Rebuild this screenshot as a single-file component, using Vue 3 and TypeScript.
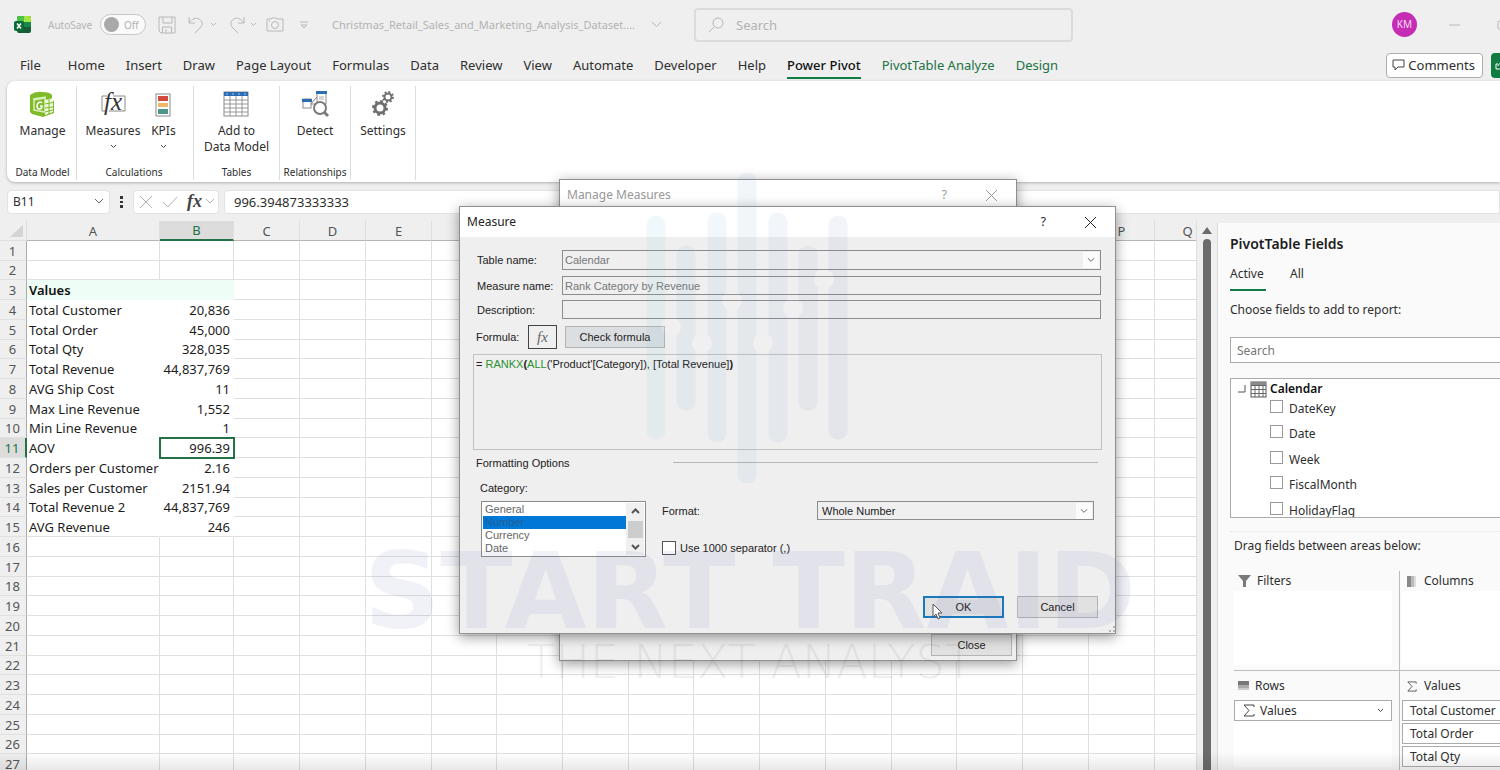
<script setup lang="ts">
import { ref } from 'vue'

interface Tab { label: string; kind?: string }
interface Row { n: number; label?: string; value?: string }

const tabs: Tab[] = [
  { label: 'File', kind: 'file' }, { label: 'Home' }, { label: 'Insert' }, { label: 'Draw' },
  { label: 'Page Layout' }, { label: 'Formulas' }, { label: 'Data' }, { label: 'Review' },
  { label: 'View' }, { label: 'Automate' }, { label: 'Developer' }, { label: 'Help' },
  { label: 'Power Pivot', kind: 'current' }, { label: 'PivotTable Analyze', kind: 'context' },
  { label: 'Design', kind: 'context' },
]

const columns = 'ABCDEFGHIJKLMNOPQ'.split('')

const pivot: Record<number, [string, string]> = {
  3: ['Values', ''],
  4: ['Total Customer', '20,836'],
  5: ['Total Order', '45,000'],
  6: ['Total Qty', '328,035'],
  7: ['Total Revenue', '44,837,769'],
  8: ['AVG Ship Cost', '11'],
  9: ['Max Line Revenue', '1,552'],
  10: ['Min Line Revenue', '1'],
  11: ['AOV', '996.39'],
  12: ['Orders per Customer', '2.16'],
  13: ['Sales per Customer', '2151.94'],
  14: ['Total Revenue 2', '44,837,769'],
  15: ['AVG Revenue', '246'],
}

const rows: Row[] = Array.from({ length: 27 }, (_, i) => ({
  n: i + 1,
  label: pivot[i + 1]?.[0],
  value: pivot[i + 1]?.[1],
}))

const fields = ['DateKey', 'Date', 'Week', 'FiscalMonth', 'HolidayFlag']
const valueItems = ['Total Customer', 'Total Order', 'Total Qty']
const categories = ['General', 'Number', 'Currency', 'Date']

const cellRef = ref('B11')
const cellFormula = ref('996.394873333333')
const tableName = ref('Calendar')
const measureName = ref('Rank Category by Revenue')
const description = ref('')
const category = ref('Number')
const format = ref('Whole Number')
const useSeparator = ref(false)
</script>

<template>
  <div class="app">
    <header class="titlebar">
      <svg class="xl" width="18" height="18" viewBox="0 0 18 18" aria-hidden="true">
        <rect x="3" y="0" width="14" height="17" rx="2" fill="#185c37" />
        <path d="M5 0h5v6H3V2a2 2 0 0 1 2-2z" fill="#4cc24a" />
        <path d="M10 0h5a2 2 0 0 1 2 2v4h-7z" fill="#a5e63c" />
        <path d="M10 6h7v5h-7z" fill="#18884b" />
        <rect x="0" y="5" width="10" height="10" rx="2" fill="#0b6b37" />
        <path d="M3 7.500l4 5M7 7.500l-4 5" stroke="#fff" stroke-width="1.500" />
      </svg>
      <span class="autosave">AutoSave</span>
      <button class="toggle" type="button" role="switch" aria-checked="false" aria-label="AutoSave"><i></i>Off</button>
      <button class="tool save" type="button" aria-label="Save">
        <svg width="18" height="18" viewBox="0 0 18 18"><path d="M1 1h16v16H3l-2-2zM5 1v6h9V1M4.500 17v-6h9v6M8 13v4" /></svg>
      </button>
      <button class="tool undo" type="button" aria-label="Undo">
        <svg width="17" height="18" viewBox="0 0 17 18"><path d="M1 1v6h6M1 7c3-4 7-6 10-4 4 2 4 6 1 9l-5 5" /></svg>
        <svg width="7" height="5" viewBox="0 0 7 5"><path d="M1 1l2.500 2.500L6 1" /></svg>
      </button>
      <button class="tool redo" type="button" aria-label="Redo">
        <svg width="17" height="18" viewBox="0 0 17 18"><path d="M16 1v6h-6M16 7c-3-4-7-6-10-4-4 2-4 6-1 9l5 5" /></svg>
        <svg width="7" height="5" viewBox="0 0 7 5"><path d="M1 1l2.500 2.500L6 1" /></svg>
      </button>
      <button class="tool camera" type="button" aria-label="Screenshot">
        <svg width="18" height="15" viewBox="0 0 18 15"><path d="M1 2h4l1-1h4l1 1h6v12H1z" /><circle cx="9" cy="8" r="3.500" /><path d="M3 4h1" /></svg>
      </button>
      <button class="tool more" type="button" aria-label="Customize toolbar">
        <svg width="8" height="8" viewBox="0 0 8 8"><path d="M0 1h8M1 4l3 3 3-3z" /></svg>
      </button>
      <button class="filename" type="button">Christmas_Retail_Sales_and_Marketing_Analysis_Dataset....
        <svg width="11" height="7" viewBox="0 0 11 7"><path d="M1 1l4.500 4.500L10 1" /></svg>
      </button>
      <label class="topsearch">
        <svg width="16" height="16" viewBox="0 0 16 16"><circle cx="10" cy="6" r="5" /><path d="M6 10l-5 5" /></svg>
        <input type="search" placeholder="Search" aria-label="Search" />
      </label>
      <div class="account">
        <span class="avatar">KM</span>
        <button type="button" class="win" aria-label="Minimize"><svg width="11" height="2" viewBox="0 0 11 2"><path d="M0 1h11" /></svg></button>
        <button type="button" class="win max" aria-label="Maximize"><svg width="10" height="10" viewBox="0 0 10 10"><rect x="1" y="1" width="8" height="8" rx="1" /></svg></button>
      </div>
    </header>

    <nav class="tabs" aria-label="Ribbon tabs">
      <a v-for="t in tabs" :key="t.label" href="#" :class="t.kind">{{ t.label }}</a>
      <span class="grow"></span>
      <button class="comments" type="button">
        <svg width="13" height="12" viewBox="0 0 13 12"><path d="M1 1h11v7H6l-3 3V8H1z" /></svg>Comments
      </button>
      <button class="share" type="button" aria-label="Share">
        <svg width="10" height="10" viewBox="0 0 10 10"><path d="M3 4H1v5h8M3 6c1-3 3-3 6-3M7 1l2 2-2 2" /></svg>
      </button>
    </nav>

    <section class="ribbon" aria-label="Power Pivot">
      <div class="group g1">
        <div class="cmds">
          <button type="button">
            <svg width="26" height="26" viewBox="0 0 26 26">
              <path d="M1 4q6-4 12-3 8 0 10 3v5l2 1v12l-11 4-11-3-2-2z" fill="#7fba28" />
              <path d="M4 8l13-2M5 9l11-2v14l-11-2z" fill="none" stroke="#d9efb8" stroke-width="1.500" />
              <path d="M13 12c-1-2-5-1-5 3s5 4 5 0h-2" fill="none" stroke="#fff" stroke-width="1.500" />
              <path d="M16 9l8-2v14l-8 3z" fill="#eef8df" />
              <path d="M16 13l8-1.500M16 17l8-1M16 21l8-2M20 8v15" stroke="#7fba28" />
            </svg>Manage
          </button>
        </div>
        <h2>Data Model</h2>
      </div>
      <div class="group g2">
        <div class="cmds">
          <button type="button">
            <svg width="26" height="26" viewBox="0 0 26 26">
              <path d="M7 5H2v15h3M13 5h12v15H9" fill="none" stroke="#8a8a8a" />
              <text x="4" y="19" class="fxglyph">fx</text>
            </svg>Measures
            <svg class="chev" width="7" height="5" viewBox="0 0 7 5"><path d="M1 1l2.500 2.500L6 1" /></svg>
          </button>
          <button type="button" class="kpi">
            <svg width="26" height="26" viewBox="0 0 26 26">
              <rect x="6" y="3" width="14" height="22" fill="#fff" stroke="#8a8a8a" />
              <path d="M8 5h10v5H8z" fill="#d24a3c" /><path d="M8 12h10v4H8z" fill="#f0b866" /><path d="M8 18h10v5H8z" fill="#4c9587" />
            </svg>KPIs
            <svg class="chev" width="7" height="5" viewBox="0 0 7 5"><path d="M1 1l2.500 2.500L6 1" /></svg>
          </button>
        </div>
        <h2>Calculations</h2>
      </div>
      <div class="group g3">
        <div class="cmds">
          <button type="button">
            <svg width="26" height="26" viewBox="0 0 26 26">
              <rect x="1" y="1" width="24" height="24" fill="#fff" stroke="#8a8a8a" />
              <path d="M1 1h24v4H1z" fill="#2b6cb5" />
              <path d="M1 9h24M1 13h24M1 17h24M1 21h24M7 5v20M13 5v20M19 5v20" stroke="#979797" />
              <path d="M3 3h2M9 3h2M15 3h2M21 3h2" stroke="#a9c8e8" />
            </svg>Add to<br />Data Model
          </button>
        </div>
        <h2>Tables</h2>
      </div>
      <div class="group g4">
        <div class="cmds">
          <button type="button">
            <svg width="26" height="26" viewBox="0 0 26 26">
              <path d="M9 13l4-5 3-3M9 13h4" fill="none" stroke="#8a8a8a" />
              <rect x="1" y="8" width="8" height="9" fill="#fff" stroke="#8a8a8a" /><path d="M0 8h10v3H0z" fill="#2b6cb5" />
              <rect x="15" y="1" width="9" height="12" fill="#fff" stroke="#8a8a8a" /><path d="M14 0h11v3H14z" fill="#2b6cb5" /><path d="M17 6h5M17 8h5" stroke="#aaa" />
              <circle cx="18" cy="17" r="6" fill="#fff" stroke="#7a7a7a" stroke-width="2" /><path d="M22 21l4 4" stroke="#7a7a7a" stroke-width="3" />
            </svg>Detect
          </button>
        </div>
        <h2>Relationships</h2>
      </div>
      <div class="group g5">
        <div class="cmds">
          <button type="button">
            <svg width="26" height="26" viewBox="0 0 26 26" fill="none" stroke="#6f6f6f">
              <circle cx="10" cy="17" r="5" stroke-width="3" /><circle cx="10" cy="17" r="7" stroke-width="2" stroke-dasharray="2.700 2.800" />
              <circle cx="18" cy="6" r="3.500" stroke-width="2" /><circle cx="18" cy="6" r="5" stroke-width="2" stroke-dasharray="1.900 2" />
            </svg>Settings
          </button>
        </div>
      </div>
    </section>

    <div class="formulabar">
      <label class="namebox"><input v-model="cellRef" aria-label="Name box" />
        <svg width="10" height="7" viewBox="0 0 10 7"><path d="M1 1l4 4 4-4" /></svg></label>
      <svg class="dots" width="3" height="12" viewBox="0 0 3 12"><path d="M0 0h3v3H0zM0 5h3v2H0zM0 9h3v3H0z" fill="#333" /></svg>
      <div class="fxtools">
        <button type="button" aria-label="Cancel entry"><svg width="14" height="14" viewBox="0 0 14 14"><path d="M1 1l12 12M13 1L1 13" /></svg></button>
        <button type="button" aria-label="Enter"><svg width="16" height="12" viewBox="0 0 16 12"><path d="M1 6l5 5L15 1" /></svg></button>
        <button type="button" class="fx" aria-label="Insert function">fx</button>
        <svg width="10" height="7" viewBox="0 0 10 7"><path d="M1 1l4 4 4-4" /></svg>
      </div>
      <input v-model="cellFormula" class="formula" aria-label="Formula bar" />
    </div>

    <main class="work">
      <div class="sheet">
        <table>
          <colgroup><col class="rh" /><col v-for="c in columns" :key="c" :class="'c' + c" /></colgroup>
          <thead>
            <tr>
              <th class="corner"><svg width="13" height="12" viewBox="0 0 13 12"><path d="M13 0v12H0z" fill="#d4d4d4" /></svg></th>
              <th v-for="c in columns" :key="c" scope="col" :class="{ on: c === 'B' }">{{ c }}</th>
            </tr>
          </thead>
          <tbody>
            <tr v-for="r in rows" :key="r.n" :class="{ filled: r.label, lead: r.n === 3, last: r.n === 15 }">
              <th scope="row" :class="{ on: r.n === 11 }">{{ r.n }}</th>
              <td>{{ r.label }}</td>
              <td class="num" :class="{ active: r.n === 11 }">{{ r.value }}</td>
              <td v-for="c in columns.slice(2)" :key="c"></td>
            </tr>
          </tbody>
        </table>
      </div>
      <div class="vscroll" aria-hidden="true">
        <svg width="10" height="7" viewBox="0 0 10 7"><path d="M5 0l5 7H0z" fill="#6b6b6b" /></svg>
        <i></i>
      </div>

      <aside class="panel">
        <h1>PivotTable Fields</h1>
        <div class="ptabs"><a href="#" class="sel">Active</a><a href="#">All</a></div>
        <p class="hint">Choose fields to add to report:</p>
        <input class="psearch" type="search" placeholder="Search" aria-label="Search fields" />
        <div class="tree">
          <div class="node">
            <svg width="8" height="8" viewBox="0 0 8 8"><path d="M7 0v7H0" fill="none" stroke="#555" /></svg>
            <svg width="17" height="17" viewBox="0 0 17 17"><rect x="1" y="1" width="15" height="15" fill="#fff" stroke="#555" /><path d="M1 1h15v3H1z" fill="#8a8a8a" /><path d="M1 4.500h15M1 8.500h15M1 12.500h15M5 4v12M9 4v12M13 4v12" stroke="#666" /></svg>
            <b>Calendar</b>
          </div>
          <label v-for="f in fields" :key="f"><input type="checkbox" /><span>{{ f }}</span></label>
        </div>
        <p class="drag">Drag fields between areas below:</p>
        <div class="areas">
          <section>
            <h3><svg width="13" height="12" viewBox="0 0 13 12"><path d="M0 0h13L8 6v6H5V6z" fill="#7a7a7a" /></svg>Filters</h3>
            <div class="drop"></div>
          </section>
          <section>
            <h3><svg width="10" height="11" viewBox="0 0 10 11"><path d="M0 0h4v11H0z" fill="#888" /><path d="M4 0h3v11H4z" fill="#bbb" /><path d="M7 0h2v11H7z" fill="#ddd" /></svg>Columns</h3>
            <div class="drop"></div>
          </section>
          <section>
            <h3><svg width="11" height="10" viewBox="0 0 11 10"><path d="M0 0h11v4H0z" fill="#777" /><path d="M0 4h11v3H0z" fill="#aaa" /><path d="M0 7h11v2H0z" fill="#ccc" /></svg>Rows</h3>
            <div class="drop">
              <button type="button" class="pill">
                <svg width="12" height="13" viewBox="0 0 12 13"><path d="M11 3V1H1l5 5.500L1 12h10v-2" /></svg>Values
                <svg class="end" width="7" height="5" viewBox="0 0 7 5"><path d="M1 1l2.500 2.500L6 1" /></svg>
              </button>
            </div>
          </section>
          <section>
            <h3><svg class="sigma" width="10" height="11" viewBox="0 0 12 13"><path d="M11 3V1H1l5 5.500L1 12h10v-2" /></svg>Values</h3>
            <div class="drop"><button v-for="v in valueItems" :key="v" type="button" class="pill wide">{{ v }}</button></div>
          </section>
        </div>
      </aside>
    </main>

    <section class="dialog manage" role="dialog" aria-label="Manage Measures">
      <header><span>Manage Measures</span>
        <button type="button" class="help" aria-label="Help">?</button>
        <button type="button" aria-label="Close window"><svg width="11" height="11" viewBox="0 0 11 11"><path d="M0 0l11 11M11 0L0 11" /></svg></button>
      </header>
      <footer><button type="button" class="btn">Close</button></footer>
    </section>

    <section class="dialog measure" role="dialog" aria-label="Measure">
      <header><span>Measure</span>
        <button type="button" class="help" aria-label="Help">?</button>
        <button type="button" aria-label="Close dialog"><svg width="11" height="11" viewBox="0 0 11 11"><path d="M0 0l11 11M11 0L0 11" /></svg></button>
      </header>
      <form class="body" @submit.prevent>
        <div class="line">
          <label for="tname">Table name:</label>
          <span class="combo"><select id="tname" v-model="tableName"><option>Calendar</option></select>
            <svg width="9" height="6" viewBox="0 0 9 6"><path d="M1 1l3.500 3.500L8 1" /></svg></span>
        </div>
        <div class="line"><label for="mname">Measure name:</label><input id="mname" v-model="measureName" /></div>
        <div class="line"><label for="desc">Description:</label><input id="desc" v-model="description" /></div>
        <div class="fline">
          <span>Formula:</span>
          <button type="button" class="fxbtn" aria-label="Insert function">fx</button>
          <button type="button" class="btn check">Check formula</button>
        </div>
        <div class="editor" role="textbox" contenteditable="true" aria-label="Formula">= <em>RANKX</em><b>(</b><em>ALL</em>('Product'[Category]), [Total Revenue]<b>)</b></div>
        <div class="legend"><span>Formatting Options</span><i></i></div>
        <label class="catlabel" for="cat">Category:</label>
        <div class="options">
          <div class="listbox">
            <select id="cat" v-model="category" size="4"><option v-for="c in categories" :key="c">{{ c }}</option></select>
            <div class="bar" aria-hidden="true">
              <svg width="9" height="6" viewBox="0 0 9 6"><path d="M1 5l3.500-3.500L8 5" /></svg>
              <i></i>
              <svg width="9" height="6" viewBox="0 0 9 6"><path d="M1 1l3.500 3.500L8 1" /></svg>
            </div>
          </div>
          <div class="fmt">
            <div class="fmtrow"><label for="fmt">Format:</label>
              <span class="combo"><select id="fmt" v-model="format"><option>Whole Number</option></select>
                <svg width="9" height="6" viewBox="0 0 9 6"><path d="M1 1l3.500 3.500L8 1" /></svg></span>
            </div>
            <label class="sep"><input v-model="useSeparator" type="checkbox" />Use 1000 separator (,)</label>
          </div>
        </div>
        <footer><button type="submit" class="btn ok">OK</button><button type="button" class="btn">Cancel</button></footer>
      </form>
      <svg class="grip" width="7" height="7" viewBox="0 0 7 7"><path d="M5 0h2v2H5zM5 4h2v2H5zM1 4h2v2H1z" fill="#b5b5b5" /></svg>
    </section>

    <div class="brand" aria-hidden="true">
      <svg width="220" height="320" viewBox="0 0 220 320">
        <g stroke-width="19" stroke-linecap="round">
          <path d="M16 55v205" stroke="#5bb5d0" /><path d="M46 85v146" stroke="#5c9bd0" /><path d="M77 52v211" stroke="#5fa3cc" />
          <path d="M107 12v292" stroke="#6b93cc" /><path d="M138 52v211" stroke="#6a94c4" /><path d="M168 85v146" stroke="#7a86bb" />
          <path d="M198 55v205" stroke="#7076c6" />
        </g>
        <g fill="#ffffff"><circle cx="31" cy="157" r="10" /><circle cx="62" cy="173" r="10" /><circle cx="92" cy="131" r="10" /><circle cx="123" cy="173" r="10" /><circle cx="153" cy="138" r="10" /><circle cx="184" cy="109" r="10" /></g>
      </svg>
      <div class="word">START TRAID</div>
      <div class="tag">THE NEXT ANALYST</div>
    </div>

    <svg class="cursor" width="12" height="18" viewBox="0 0 12 18" aria-hidden="true"><path d="M1 1v13l3-3 2 5 2-1-2-5h4z" fill="#fff" stroke="#555" /></svg>
    <div class="shade" aria-hidden="true"></div>
  </div>
</template>

<style>
body { overflow: hidden; background: #efefef; }
</style>

<style scoped>
* { box-sizing: border-box; }
button, input, select { font: inherit; color: inherit; margin: 0; padding: 0; border: 0; background: none; outline: none; }
input { min-width: 0; }
h1, h2, h3, p { margin: 0; font-weight: 400; }
a { color: inherit; text-decoration: none; }
svg { flex: none; }
.app { position: relative; display: flex; flex-direction: column; height: 100vh; overflow: hidden; background: #efefef; color: #2e2e2e; font: 13px/16px "Noto Sans", "Open Sans", sans-serif; }

.titlebar { display: flex; align-items: center; height: 49px; flex: none; padding-left: 14px; color: #b3b3b3; }
.titlebar svg:not(.xl) { fill: none; stroke: #b8b8b8; }
.autosave { margin-left: 16px; font-size: 10px; width: 46px; }
.toggle { display: flex; align-items: center; gap: 5px; width: 46px; height: 21px; margin-left: 6px; padding-left: 3px; border: 1px solid #c6c6c6; border-radius: 11px; background: #fafafa; font-size: 10px; }
.toggle i { width: 15px; height: 15px; border-radius: 50%; background: #a9a9a9; }
.tool { display: flex; align-items: center; }
.undo, .redo { gap: 5px; }
.save { margin-left: 12px; }
.undo { margin-left: 12px; }
.redo { margin-left: 11px; }
.camera { margin-left: 9px; }
.more { margin-left: 16px; }
.filename { display: flex; align-items: center; gap: 5px; width: 330px; margin-left: 24px; font-size: 11px; white-space: nowrap; justify-content: space-between; }
.topsearch { display: flex; align-items: center; gap: 12px; width: 379px; height: 34px; margin-left: 32px; padding: 0 12px; border: 2px solid #dbdbdb; border-radius: 4px; }
.topsearch input { flex: 1; }
input::placeholder { color: inherit; opacity: 1; }
.account { display: flex; align-items: center; flex: none; width: 108px; margin-left: auto; }
.avatar { flex: none; width: 25px; height: 25px; border-radius: 50%; background: #c42db4; color: #f8dcf5; font-size: 10px; line-height: 25px; text-align: center; }
.win { display: flex; flex: none; margin-left: 32px; }
.win.max { margin-left: 37px; }

.tabs { display: flex; align-items: center; flex: none; height: 32px; padding-left: 20px; gap: 21px; white-space: nowrap; }
.tabs a { height: 28px; line-height: 29px; }
.tabs .file { margin-right: 6px; }
.tabs .current { color: #111; font-weight: 500; border-bottom: 2px solid #107c41; }
.tabs .context { color: #217346; }
.grow { flex: 1; }
.comments { display: flex; align-items: center; gap: 3px; height: 25px; padding: 0 7px 0 5px; border: 1px solid #adadad; border-radius: 4px; background: #fff; margin-right: -13px; }
.comments svg { fill: none; stroke: #444; }
.share { width: 9px; height: 25px; padding-left: 4px; border-radius: 4px 0 0 4px; background: #107c41; overflow: hidden; }
.share svg { fill: none; stroke: #fff; }

.ribbon { display: flex; flex: none; height: 101px; margin-left: 7px; padding: 5px 0 2px; background: #fff; border-radius: 8px 0 0 8px; box-shadow: 0 1px 3px #b0b0b0; font-size: 12px; }
.group { display: flex; flex-direction: column; justify-content: space-between; align-items: center; border-right: 1px solid #dcdcdc; }
.group h2 { font-size: 10px; line-height: 16px; white-space: nowrap; }
.g1 { width: 70px; padding-left: 2px; }
.g2 { width: 117px; padding-right: 2px; }
.g3 { width: 86px; }
.g4 { width: 71px; }
.g5 { width: 65px; }
.cmds { display: flex; padding-top: 5px; gap: 10px; }
.g2 .cmds { margin-right: 6px; }
.cmds button { text-align: center; line-height: 16px; white-space: nowrap; }
.cmds button > svg { display: block; margin: 0 auto 6px; overflow: visible; }
.cmds button > .chev { margin: 5px auto 0; fill: none; stroke: #444; }
.fxglyph { font: italic 25px "Liberation Serif", serif; fill: #333; }

.formulabar { display: flex; align-items: center; flex: none; height: 39px; padding-left: 7px; }
.formulabar svg { fill: none; stroke: #666; }
.formulabar .dots { margin: 0 10px 0 10px; stroke: none; }
.namebox, .fxtools, .formula { height: 24px; border-radius: 4px; background: #fff; border: 1px solid #e2e2e2; }
.namebox { display: flex; align-items: center; width: 103px; padding: 0 5px; }
.namebox input { flex: 1; font-size: 12px; }
.fxtools { display: flex; align-items: center; gap: 9px; width: 86px; padding-left: 5px; }
.fxtools button { display: flex; }
.fxtools svg { stroke: #b5b5b5; }
.fxtools .fx { font: italic 700 18px "Liberation Serif", serif; color: #444; }
.fxtools .fx + svg { margin-left: -6px; }
.formula { flex: 1; margin-left: 5px; padding: 0 9px; border-radius: 4px 0 0 4px; }

.work { display: flex; flex: 1; min-height: 0; }
.sheet { flex: 1; min-width: 0; overflow: hidden; }
table { table-layout: fixed; width: 1220px; border-collapse: separate; border-spacing: 0; }
.rh { width: 27px; }
.cA { width: 133px; }
.cB { width: 74px; }
col { width: 66px; }
.cF, .cI, .cM { width: 65px; }
th { padding: 0; font-weight: 400; color: #555; overflow: hidden; }
thead th { height: 20px; border-bottom: 1px solid #b5b5b5; border-right: 1px solid #dedede; }
thead th.on { background: #dcdcdc; border-bottom: 2px solid #217346; color: #217346; }
.corner { border-bottom-color: #dedede; text-align: right; padding-right: 3px; }
.corner svg { display: block; margin-left: auto; }
tbody tr { height: 20px; }
tbody tr:nth-child(4n + 2) { height: 19px; }
tbody th { background: #efefef; border-right: 1px solid #ababab; border-bottom: 1px solid #e0e0e0; line-height: 16px; padding: 0 1px 0 0; }
tbody th.on { background: #dcdcdc; color: #217346; border-right: 2px solid #217346; }
td { padding: 0 2px; background: #fff; border-right: 1px solid #dfdfdf; border-bottom: 1px solid #dfdfdf; line-height: 16px; color: #1c1c1c; white-space: nowrap; }
.filled td:nth-child(2), .filled td:nth-child(3) { border-color: #fff; }
.lead td:nth-child(2), .lead td:nth-child(3) { background: #effdf7; border-color: #effdf7; font-weight: 600; color: #111; }
.filled.last td:nth-child(2), .filled.last td:nth-child(3) { border-bottom-color: #dfdfdf; }
td.num { text-align: right; padding-right: 3px; }
td.active { outline: 2px solid #217346; outline-offset: -1px; }

.vscroll { display: flex; flex-direction: column; align-items: center; gap: 5px; width: 21px; padding-top: 6px; border-left: 1px solid #dedede; }
.vscroll i { flex: 1; width: 8px; border-radius: 4px 4px 0 0; background: #6b6b6b; }

.panel { display: flex; flex-direction: column; width: 283px; margin-top: 2px; padding-left: 12px; background: #fafafa; border-left: 1px solid #dadada; font-size: 12px; overflow: hidden; }
.panel h1 { font-size: 14px; line-height: 20px; font-weight: 600; padding-top: 11px; color: #1d1d1d; }
.ptabs { display: flex; gap: 24px; padding-top: 10px; line-height: 20px; }
.ptabs a { padding-bottom: 5px; }
.ptabs .sel { width: 36px; border-bottom: 2px solid #107c41; }
.hint { padding-top: 11px; }
.psearch { flex: none; height: 26px; margin-top: 19px; padding: 0 6px; border: 1px solid #ababab; border-right: 0; background: #fff; color: #767676; }
.tree { flex: none; height: 140px; margin-top: 15px; border: 1px solid #ababab; border-right: 0; background: #fff; overflow: hidden; }
.node { display: flex; align-items: center; gap: 4px; padding-left: 7px; height: 20px; color: #111; }
.node b { font-weight: 600; margin-left: -1px; }
.tree label { display: flex; align-items: center; gap: 6px; height: 20px; margin-bottom: 5px; padding-left: 39px; }
.tree label:nth-child(odd) { margin-bottom: 6px; }
.tree input { appearance: none; width: 13px; height: 13px; margin-bottom: 5px; border: 1px solid #9a9a9a; background: #fff; }
.drag { margin-top: 13px; padding: 6px 0 0 4px; border-top: 1px dotted #e4e4e4; }
.areas { display: grid; grid-template-columns: 166px 1fr; grid-template-rows: 100px 1fr; flex: 1; margin: 17px 0 0 4px; }
.areas section { display: flex; flex-direction: column; min-width: 0; }
.areas section:nth-child(odd) { border-right: 1px solid #bdbdbd; }
.areas section:nth-child(-n+2) { border-bottom: 1px solid #bdbdbd; }
.areas h3 { display: flex; align-items: center; gap: 6px; height: 20px; padding-left: 4px; font-size: 12px; }
.areas section:nth-child(n+3) h3 { margin: 5px 0 4px; }
.areas section:nth-child(even) h3 { gap: 7px; padding-left: 7px; }
.drop { display: flex; flex-direction: column; flex: 1; gap: 2px; margin: 0 7px 5px 0; background: #fff; }
.areas section:nth-child(even) .drop { margin-left: 2px; margin-right: 0; }
.pill { display: flex; align-items: center; gap: 5px; flex: none; height: 21px; padding: 0 7px 0 8px; border: 1px solid #ababab; background: #fff; white-space: nowrap; }
.pill.wide { padding-left: 7px; border-right: 0; }
.pill svg, .sigma { fill: none; stroke: #444; }
.pill .end { margin-left: auto; }

.dialog { position: absolute; display: flex; flex-direction: column; border: 1px solid #8f8f8f; background: #efefef; box-shadow: 0 3px 12px rgba(0, 0, 0, .4); }
.dialog > header { display: flex; align-items: center; flex: none; height: 30px; padding: 0 19px 0 7px; background: #fff; color: #222; font-size: 12px; }
.dialog > header span { flex: 1; }
.dialog > header button { display: flex; }
.dialog > header .help { margin-right: 39px; }
.dialog > header svg { stroke: currentColor; }
.btn { width: 81px; height: 22px; border: 1px solid #b4b4b4; background: #e1e1e1; color: #222; text-align: center; }
.manage { left: 559px; top: 179px; width: 458px; height: 482px; justify-content: space-between; font: 11px/14px "Liberation Sans", Arial, sans-serif; }
.manage > header { color: #999; font-family: "Noto Sans", sans-serif; }
.manage footer { display: flex; justify-content: flex-end; padding: 0 4px 4px; }
.measure { left: 459px; top: 206px; width: 657px; height: 428px; color: #222; font: 11px/14px "Liberation Sans", Arial, sans-serif; }
.measure > header { font-family: "Noto Sans", sans-serif; }
.body { display: flex; flex-direction: column; flex: 1; padding: 13px 13px 15px; }
.line { display: flex; align-items: center; height: 19px; margin: 0 1px 6px 4px; }
.line:first-child { height: 20px; }
.line:nth-child(2) { margin-bottom: 5px; }
.line label { width: 85px; }
.line input, .combo { flex: 1; align-self: stretch; border: 1px solid #8c8c8c; padding-left: 2px; color: #777; }
.combo { display: flex; align-items: center; }
.combo select { flex: 1; appearance: none; }
.combo svg { width: 16px; height: 16px; padding: 5px 4px; margin-right: 1px; background: #fbfbfb; }
.combo svg, .bar svg { fill: none; stroke: #555; }
.fline { display: flex; align-items: center; height: 24px; margin-left: 3px; }
.fline span { width: 52px; }
.fxbtn { width: 29px; height: 24px; border: 1px solid #444; margin-right: 8px; font: italic 15px/20px "Liberation Serif", serif; color: #666; }
.check { width: 100px; background: #dcdfe1; }
.editor { height: 96px; margin-top: 5px; padding: 2px; border: 1px solid #c2c2c2; }
.editor em { color: #2a9030; font-style: normal; }
.legend { display: flex; align-items: center; gap: 103px; margin: 5px 4px 0 3px; height: 15px; }
.legend i { flex: 1; height: 1px; background: #b5b5b5; }
.catlabel { margin: 11px 0 6px 7px; }
.options { display: flex; margin: 0 8px; }
.listbox { display: flex; width: 165px; height: 56px; border: 1px solid #8c8c8c; background: #fff; padding: 1px; }
.listbox select { flex: 1; overflow: hidden; height: 52px; color: #666; }
.listbox option { height: 13px; min-height: 13px; padding: 0 2px; line-height: 13px; }
.listbox option:checked { background: #0078d7 linear-gradient(#0078d7, #0078d7); color: #235f98; }
.bar { display: flex; flex-direction: column; align-items: center; justify-content: space-between; width: 18px; padding: 5px 0; background: #f0f0f0; }
.bar svg { stroke-width: 2; }
.bar i { width: 15px; height: 17px; background: #cdcdcd; }
.fmt { flex: 1; padding-left: 16px; }
.fmtrow { display: flex; align-items: center; height: 19px; }
.fmtrow label { width: 155px; }
.fmtrow .combo { color: #222; padding-left: 4px; }
.sep { display: flex; align-items: center; gap: 4px; margin-top: 21px; }
.sep input { appearance: none; width: 14px; height: 14px; border: 1px solid #555; background: #fff; }
.measure footer { display: flex; justify-content: flex-end; gap: 13px; margin: auto 4px 0 0; }
.ok { border: 2px solid #1a78bd; }
.grip { position: absolute; right: 0; bottom: 0; }

.brand { position: absolute; left: 362px; top: 170px; width: 776px; pointer-events: none; white-space: nowrap; opacity: .08; color: #5a62b4; display: flex; flex-direction: column; align-items: center; }
.brand svg { fill: none; }
.word { margin-top: 42px; font: 700 106px/120px "DejaVu Sans", sans-serif; }
.tag { font: 200 46px/48px "DejaVu Sans", sans-serif; margin-top: -14px; color: #444; }
.cursor { position: absolute; left: 932px; top: 603px; }
.shade { position: absolute; inset: auto 0 0 0; height: 18px; background: linear-gradient(transparent, rgba(0, 0, 0, .09)); pointer-events: none; }
</style>
